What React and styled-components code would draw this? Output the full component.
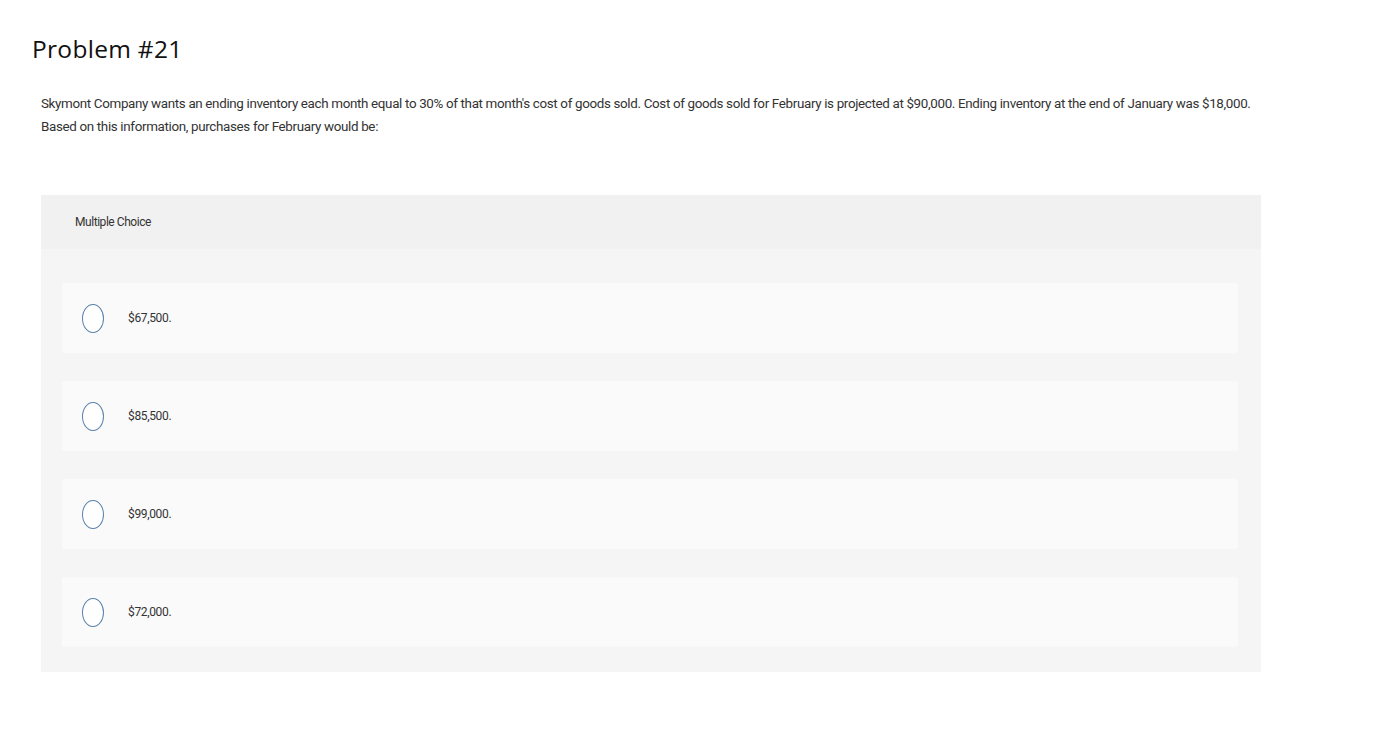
import React from "react";
import styled, { createGlobalStyle } from "styled-components";

const Global = createGlobalStyle`
  html, body { margin: 0; padding: 0; background: #ffffff; }
  body { font-family: Roboto, "Liberation Sans", sans-serif; color: #333; }
`;

const Page = styled.div`
  width: 1388px;
  min-height: 746px;
  box-sizing: border-box;
  padding: 33px 0 0 41px;
`;

const Title = styled.h1`
  margin: 0 0 0 -9px;
  font-family: "Open Sans", "Noto Sans", sans-serif;
  font-weight: 400;
  font-size: 24.5px;
  line-height: 32px;
  color: #111;
  letter-spacing: 0.3px;
`;

const Question = styled.p`
  margin: 27px 0 0 0;
  width: 1250px;
  font-size: 13.4px;
  line-height: 23px;
  letter-spacing: -0.34px;
  color: #333;
`;

const Card = styled.section`
  margin-top: 57px;
  width: 1220px;
  background: #f5f5f5;
`;

const CardHeader = styled.div`
  height: 54px;
  display: flex;
  align-items: center;
  padding-left: 34px;
  background: #f1f1f1;
  font-size: 12px;
  letter-spacing: -0.45px;
  color: #333;
`;

const Options = styled.div`
  display: flex;
  flex-direction: column;
  gap: 28px;
  padding: 34px 23px 25px 21px;
`;

const Option = styled.label`
  height: 70px;
  display: flex;
  align-items: center;
  padding-left: 20px;
  background: #fafafa;
  border-radius: 3px;
  cursor: pointer;
`;

const Radio = styled.span`
  width: 20px;
  height: 27px;
  border: 1.5px solid #5a82ab;
  border-radius: 50%;
  background: #fff;
  flex: none;
`;

const OptionText = styled.span`
  margin-left: 24px;
  font-size: 12px;
  letter-spacing: -0.35px;
  color: #333;
`;

const choices = ["$67,500.", "$85,500.", "$99,000.", "$72,000."];

export default function App() {
  return (
    <Page>
      <Global />
      <Title>Problem #21</Title>
      <Question>
        Skymont Company wants an ending inventory each month equal to 30% of that month's cost of goods sold. Cost of goods sold for February is projected at $90,000. Ending inventory at the end of January was $18,000.
        <br />
        Based on this information, purchases for February would be:
      </Question>
      <Card>
        <CardHeader>Multiple Choice</CardHeader>
        <Options>
          {choices.map((c) => (
            <Option key={c}>
              <Radio />
              <OptionText>{c}</OptionText>
            </Option>
          ))}
        </Options>
      </Card>
    </Page>
  );
}
